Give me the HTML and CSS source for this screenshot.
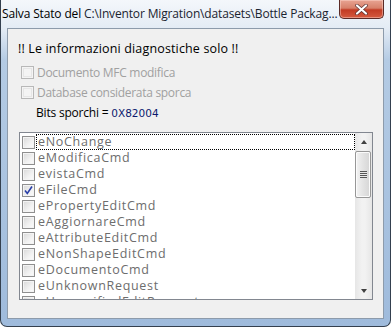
FILE: index.html
```html
<!DOCTYPE html>
<html lang="it">
<head>
    <meta charset="UTF-8">
    <title>Salva Stato</title>
    <link rel="stylesheet" href="styles.css">
</head>
<body>
    <div class="window">
        <div class="titlebar">
            <span class="title">Salva Stato del <span class="path">C:\Inventor Migration\datasets\Bottle Packag...</span></span>
            <div class="close-btn">
                <svg width="13" height="11" viewBox="0 0 13 11">
                    <path d="M2 1.5 L11 9.5 M11 1.5 L2 9.5" stroke="#5a3030" stroke-width="3.6" stroke-linecap="round"/>
                    <path d="M2 1.5 L11 9.5 M11 1.5 L2 9.5" stroke="#ffffff" stroke-width="2.2" stroke-linecap="round"/>
                </svg>
            </div>
        </div>

        <div class="client">
            <p class="intro">!! Le informazioni diagnostiche solo !!</p>

            <div class="option disabled">
                <span class="cb"></span>
                <span>Documento MFC modifica</span>
            </div>
            <div class="option disabled">
                <span class="cb"></span>
                <span>Database considerata sporca</span>
            </div>

            <div class="bits">Bits sporchi = <span class="hex">0X82004</span></div>

            <div class="listbox">
                <div class="items">
                    <div class="item focused"><span class="cb"></span><span class="label">eNoChange</span></div>
                    <div class="item"><span class="cb"></span><span class="label">eModificaCmd</span></div>
                    <div class="item"><span class="cb"></span><span class="label">evistaCmd</span></div>
                    <div class="item">
                        <span class="cb checked">
                            <svg width="11" height="11" viewBox="0 0 11 11">
                                <path d="M2 5.5 L4.3 8.5 L9 1.5" fill="none" stroke="#2a3fa8" stroke-width="1.6"/>
                            </svg>
                        </span>
                        <span class="label">eFileCmd</span>
                    </div>
                    <div class="item"><span class="cb"></span><span class="label">ePropertyEditCmd</span></div>
                    <div class="item"><span class="cb"></span><span class="label">eAggiornareCmd</span></div>
                    <div class="item"><span class="cb"></span><span class="label">eAttributeEditCmd</span></div>
                    <div class="item"><span class="cb"></span><span class="label">eNonShapeEditCmd</span></div>
                    <div class="item"><span class="cb"></span><span class="label">eDocumentoCmd</span></div>
                    <div class="item"><span class="cb"></span><span class="label">eUnknownRequest</span></div>
                    <div class="item"><span class="cb"></span><span class="label">eUnspecifiedEditRequest</span></div>
                </div>

                <div class="scrollbar">
                    <div class="arrow up"></div>
                    <div class="track">
                        <div class="thumb">
                            <div class="grip"></div>
                        </div>
                    </div>
                    <div class="arrow down"></div>
                </div>
            </div>
        </div>
    </div>
</body>
</html>
```

FILE: styles.css
```css
* {
    margin: 0;
    padding: 0;
    box-sizing: border-box;
}

body {
    width: 391px;
    height: 327px;
    overflow: hidden;
    background: #ffffff;
    font-family: 'Open Sans', 'Noto Sans', sans-serif;
    font-size: 12px;
}

.window {
    width: 391px;
    height: 327px;
    display: flex;
    flex-direction: column;
    padding: 0 6px 7px 6px;
    border: 1px solid #34404f;
    border-top: none;
    border-radius: 0 0 7px 7px;
    background: linear-gradient(to bottom, #f4f7fb 0px, #e4ecf5 28px, #b4cbe4 60px, #9fbbdc 100%);
}

/* title bar */
.titlebar {
    height: 28px;
    display: flex;
    align-items: flex-start;
    margin-left: -5px;
}

.title {
    margin-top: 5px;
    color: #000000;
    white-space: nowrap;
    letter-spacing: -0.15px;
}

.title .path {
    color: #1b2430;
}

.close-btn {
    margin-left: auto;
    width: 45px;
    height: 19px;
    display: flex;
    align-items: center;
    justify-content: center;
    border: 1px solid #5b2a26;
    border-top: none;
    border-radius: 0 0 5px 5px;
    background: linear-gradient(to bottom, #e8a493 0%, #d7806a 45%, #c23b24 55%, #d55a3f 100%);
    box-shadow: inset 0 0 0 1px rgba(255, 220, 210, 0.45);
}

/* client area */
.client {
    flex: 1;
    background: #f0f0f0;
    border: 1px solid #8d9bab;
    padding: 12px 10px 0 10px;
}

.intro {
    line-height: 16px;
    font-size: 12.5px;
    letter-spacing: 0.15px;
    color: #000;
}

.option {
    display: flex;
    align-items: center;
    gap: 3px;
    height: 20px;
    margin-left: 3px;
    letter-spacing: -0.3px;
}

.option:first-of-type {
    margin-top: 5px;
}

.option.disabled {
    color: #a0a0a0;
}

.option.disabled .cb {
    border-color: #b8b8b8;
    background: #f4f4f4;
    box-shadow: inset 0 0 0 1px #f4f4f4, inset 0 0 0 2px #e6e6e6;
}

.cb {
    width: 13px;
    height: 13px;
    flex-shrink: 0;
    display: flex;
    align-items: center;
    justify-content: center;
    border: 1px solid #8f8f8f;
    background: linear-gradient(135deg, #d8d8d8 0%, #f2f2f2 60%, #fcfcfc 100%);
    box-shadow: inset 0 0 0 1px #f4f4f4;
}

.bits {
    height: 21px;
    line-height: 21px;
    margin-left: 18px;
    color: #000;
    letter-spacing: -0.2px;
}

.hex {
    color: #0c1a6e;
    font-family: 'DejaVu Sans', sans-serif;
    font-size: 10.5px;
    letter-spacing: 0;
}

/* list box with check items */
.listbox {
    margin-top: 9px;
    margin-left: 1px;
    width: 354px;
    height: 168px;
    display: flex;
    background: #ffffff;
    border: 1px solid #828790;
}

.items {
    flex: 1;
    padding-top: 1px;
    overflow: hidden;
}

.item {
    height: 16px;
    display: flex;
    align-items: center;
    padding-left: 2px;
    color: #6d6d6d;
    font-size: 12.5px;
    letter-spacing: 0.7px;
}

.item .label {
    flex: 1;
    height: 16px;
    line-height: 14px;
    padding-left: 1px;
    margin-left: 1px;
    border: 1px solid transparent;
    white-space: nowrap;
}

.item.focused .label {
    border: 1px dotted #000000;
}

/* scrollbar */
.scrollbar {
    width: 17px;
    display: flex;
    flex-direction: column;
    background: linear-gradient(to right, #e6e6e6, #f2f2f2 40%, #f2f2f2 60%, #e6e6e6);
}

.arrow {
    height: 17px;
    display: flex;
    align-items: center;
    justify-content: center;
}

.arrow::after {
    content: '';
    border-left: 3.5px solid transparent;
    border-right: 3.5px solid transparent;
}

.arrow.up::after {
    border-bottom: 4px solid #404040;
}

.arrow.down::after {
    border-top: 4px solid #404040;
}

.track {
    flex: 1;
    padding: 1px 1px 0 0;
}

.thumb {
    height: 47px;
    display: flex;
    align-items: center;
    justify-content: center;
    border: 1px solid #979797;
    border-radius: 2px;
    background: linear-gradient(to right, #f3f3f3, #e3e3e3 50%, #d6d6d6);
    box-shadow: inset 0 0 0 1px #fbfbfb;
}

.grip {
    width: 7px;
    height: 7px;
    background: repeating-linear-gradient(to bottom, #555555 0, #555555 1px, #e8e8e8 1px, #e8e8e8 2px);
}
```
